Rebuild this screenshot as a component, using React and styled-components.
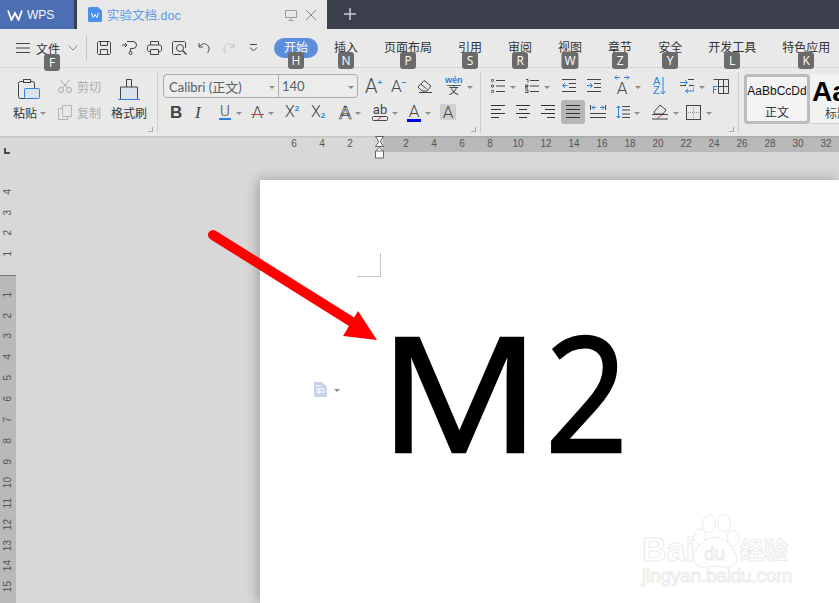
import React from 'react';
import styled, { createGlobalStyle } from 'styled-components';

const Global = createGlobalStyle`
  html, body { margin: 0; padding: 0; background: #d8d8d8; }
  * { box-sizing: border-box; }
`;
const CJK = `"Liberation Sans", "Noto Sans CJK SC", sans-serif`;
const D = '#444';
const B = '#2f7fdc';

const Shell = styled.div`
  position: relative; width: 839px; height: 603px; overflow: hidden;
  display: flex; flex-direction: column; font-family: ${CJK}; color: #333; font-size: 12px;
`;
const TitleBar = styled.div`display: flex; height: 29px; background: #3c404d; flex-shrink: 0;`;
const AppTab = styled.div`
  width: 74px; background: #4b6fb2; color: #f2f5fb; display: flex; align-items: center;
  padding-left: 7px; gap: 4px; font-size: 12px; margin-right: 3px;
`;
const DocTab = styled.div`
  width: 250px; background: #e8e8e8; display: flex; align-items: center; padding-left: 11px;
`;
const DocName = styled.span`color: #5b9be8; font-size: 12.5px; margin-left: 5px; width: 178px;`;
const TabAction = styled.span`display: flex; margin-right: 8px;`;
const NewTab = styled.span`display: flex; margin: 8px 0 0 17px; height: 13px;`;

const MenuBar = styled.div`
  display: flex; align-items: center; height: 39px; padding-left: 16px; background: #e9e9e9;
  border-bottom: 1px solid #d9d9d9; flex-shrink: 0;
`;
const FileLabel = styled.span`margin: 0 8px 0 6px; position: relative; display: inline-block; white-space: nowrap; flex-shrink: 0;`;
const VLine = styled.span`width: 1px; height: 24px; background: #c4c4c4; margin: 0 10px 0 8px; flex-shrink: 0;`;
const Quick = styled.span`display: flex; align-items: center; width: ${p => p.$w}px; height: 24px; flex-shrink: 0;`;
const Tabs = styled.div`display: flex; align-items: center; gap: 6px; flex-shrink: 0;`;
const MenuItem = styled.span`
  position: relative; height: 20px; line-height: 20px; padding: 0 10px; border-radius: 10px; white-space: nowrap;
  color: ${p => (p.$active ? '#fff' : '#333')}; background: ${p => (p.$active ? '#5b8fdc' : 'transparent')};
`;
const KeyTip = styled.span`
  position: absolute; top: 14px; left: calc(50% + ${p => p.$dx || 0}px); transform: translateX(-50%);
  min-width: 16px; height: 17px; line-height: 17px; padding: 0 3px; text-align: center; border-radius: 3px;
  background: #6b6b6b; color: #fff; font: 12px/17px "Open Sans", sans-serif; z-index: 5;
`;

const Ribbon = styled.div`
  display: flex; height: 68px; background: #e9e9e9; flex-shrink: 0; overflow: hidden;
  box-shadow: 0 1px 2px rgba(0,0,0,.12); position: relative; z-index: 1;
`;
const Group = styled.div`
  position: relative; width: ${p => p.$w}px; flex-shrink: 0; padding-top: 6px;
  display: flex; flex-direction: ${p => p.$row ? 'row' : 'column'}; gap: ${p => p.$row ? 0 : 2}px;
  padding-left: ${p => p.$pl || 0}px;
`;
const Sep = styled.span`width: 1px; flex-shrink: 0; background: #cfcfcf; margin: 4px 0 3px;`;
const Launcher = styled.span`
  position: absolute; right: 4px; bottom: 4px; width: 5px; height: 5px;
  border-right: 1px solid #aaa; border-bottom: 1px solid #aaa;
`;
const Row = styled.div`display: flex; align-items: center; height: 24px; padding-left: ${p => p.$pl || 0}px;`;
const Column = styled.div`display: flex; flex-direction: column; gap: 2px; width: ${p => p.$w}px; flex-shrink: 0;`;
const Tool = styled.span`
  display: flex; align-items: center; width: ${p => p.$w}px; height: 24px; flex-shrink: 0;
`;
const Active = styled.span`
  display: flex; align-items: center; justify-content: center; width: 24px; height: 24px;
  background: #b6b6b6; border-radius: 3px;
`;
const Caret = styled.span`
  width: 0; height: 0; margin-left: ${p => p.$g ?? 6}px; margin-top: 2px; flex-shrink: 0;
  border-left: 3px solid transparent; border-right: 3px solid transparent; border-top: 3px solid #8c8c8c;
`;
const BigIcon = styled.span`display: flex; margin: 6px 0 0 ${p => p.$ml}px;`;
const Label = styled.span`color: ${p => p.$off ? '#adadad' : '#333'}; margin-left: ${p => p.$ml || 0}px; margin-top: 1px; white-space: nowrap;`;

const FontBox = styled.div`
  display: flex; height: 24px; width: 195px; margin: 0 7px 0 5px; border: 1px solid #aaa; border-radius: 4px; background: #ececec; flex-shrink: 0;
`;
const FontPart = styled.div`
  display: flex; align-items: center; justify-content: space-between; width: ${p => p.$w}px; padding: 0 3px 0 ${p => p.$pl}px;
  font-family: Lato, "Noto Sans CJK SC", sans-serif; font-size: 13px; color: #56606a;
  ${p => p.$div ? 'border-right: 1px solid #aaa;' : ''}
`;
const Glyph = styled.span`
  position: relative; display: inline-block; font-family: ${p => p.$f || 'Roboto, sans-serif'}; font-weight: ${p => p.$wt || 300};
  font-style: ${p => p.$it ? 'italic' : 'normal'}; font-size: ${p => p.$s || 18}px; line-height: 1; color: ${p => p.$c || D};
  ${p => p.$outline ? `color: #f4f4f4; -webkit-text-stroke: .7px ${D};` : ''}
`;
const Under = styled(Glyph)`border-bottom: 2px solid ${B}; padding: 0 1px 1px; line-height: 12px;`;
const Strike = styled(Glyph)`
  padding: 0 1px;
  &::after { content: ''; position: absolute; left: 0; right: 0; top: 10px; height: 1px; background: #c84a4a; }
`;
const Sup = styled.span`
  display: flex; color: ${B}; font: bold 8px/1 "Liberation Sans", sans-serif; margin: ${p => p.$down ? '8px 0 0 0' : '-7px 0 0 0'};
`;
const Stack = styled.span`display: flex; flex-direction: column; align-items: center; line-height: 1;`;
const Wen = styled.span`color: ${B}; font: 9px/9px "Liberation Sans", sans-serif; font-weight: bold;`;
const WenZi = styled.span`font-size: 10px; line-height: 10px; color: #333; border-top: 1px solid #666; width: 14px; text-align: center;`;
const ColorBar = styled.span`width: 14px; height: 3px; background: #0000f0; margin-top: -1px;`;
const HighlightBox = styled.span`
  width: 16px; height: 16px; background: #cfcfcf; border-radius: 1px; display: flex; align-items: center; justify-content: center;
`;
const SortLetters = styled.span`display: flex; flex-direction: column; color: ${B}; font: 11px/9.5px "Liberation Sans", sans-serif;`;

const StyleCard = styled.div`
  flex-shrink: 0; width: 66px; height: 50px; margin: 6px 0 0 5px; background: #f3f3f3; border: 3px solid #bcbcbc; border-radius: 4px;
  display: flex; flex-direction: column; align-items: center;
`;
const NextCard = styled.div`
  flex-shrink: 0; width: 40px; height: 50px; margin-top: 6px; padding-top: 4px; background: #f2f2f2; border-bottom: 1px solid #cfcfcf; padding-left: 2px;
`;
const Sample = styled.span`font-size: 12px; line-height: 28px; color: #111; white-space: nowrap;`;
const BigSample = styled.span`display: block; font: bold 28px/28px "Liberation Sans", sans-serif; color: #000;`;
const StyleName = styled.span`font-size: 12px; line-height: 16px;`;
const StyleNameNext = styled.span`display: block; font-size: 12px; line-height: 16px; padding-left: 13px; white-space: nowrap; color: #444;`;

const Workspace = styled.div`flex: 1; display: flex; flex-direction: column; background: #d8d8d8; position: relative; min-height: 0;`;
const HRuler = styled.div`display: flex; height: 16px; flex-shrink: 0; position: relative;`;
const HLeft = styled.div`display: flex; width: 383px; padding-left: 280px;`;
const HBand = styled.div`display: flex; flex: 1; background: #b9b9b9; padding-left: 9px; overflow: hidden;`;
const HNum = styled.span`flex: 0 0 28px; text-align: center; font: 10px/16px "Liberation Sans", sans-serif; color: #555;`;
const Indent = styled.svg`position: absolute; left: 375px; top: 0;`;
const TabStop = styled.svg`position: absolute; left: 4px; top: 12px;`;
const Body = styled.div`flex: 1; display: flex; min-height: 0;`;
const VRuler = styled.div`width: 16px; flex-shrink: 0; display: flex; flex-direction: column;`;
const VTop = styled.div`height: 123px; padding-top: 29px; flex-shrink: 0;`;
const VBand = styled.div`flex: 1; background: #b9b9b9; border-top: 1px solid #777; padding-top: 8px; overflow: hidden;`;
const VNum = styled.div`
  height: 20.9px; display: flex; align-items: center; justify-content: center;
  font: 10px/16px "Liberation Sans", sans-serif; color: #555;
  & > span { writing-mode: vertical-rl; transform: rotate(180deg); }
`;
const Canvas = styled.div`flex: 1; padding: 28px 0 0 244px; display: flex; min-width: 0;`;
const Sheet = styled.div`flex: 1; background: #fff; position: relative; box-shadow: -2px 0 12px rgba(0,0,0,.28);`;
const CropMark = styled.div`
  width: 24px; height: 24px; margin: 73px 0 0 97px; border-right: 1px solid #c6c6c6; border-bottom: 1px solid #c6c6c6;
`;
const BigText = styled.div`
  display: flex; font-family: "Open Sans", sans-serif; font-size: 160px; line-height: 160px; color: #000; margin: 33px 0 0 119px;
  -webkit-text-stroke: 2.5px #000; stroke-linejoin: round;
`;
const BigChar = styled.span`
  display: inline-block; transform-origin: left center; transform: scaleX(${p => p.$sx || 1}); margin-left: ${p => p.$ml || 0}px;
`;
const ParaMark = styled.div`position: absolute; left: 54px; top: 202px; display: flex; align-items: center;`;
const Watermark = styled.svg`position: absolute; right: 39px; bottom: 10px;`;
const Arrow = styled.svg`position: absolute; left: 0; top: 0; z-index: 3; pointer-events: none;`;

const Svg = styled.svg`display: block; fill: none; stroke: ${D}; stroke-width: 1; flex-shrink: 0;`;
const I = ({ w = 14, h = 14, children, ...r }) => (
  <Svg width={w} height={h} viewBox={`0 0 ${w} ${h}`} {...r}>{children}</Svg>
);
const Lines = ({ d, s = '#333' }) => <path d={d} stroke={s} />;

const LH = 'M0 .5h14M0 4.500h10M0 8.500h14M0 12.500h8';
const CH = 'M0 .5h14M3 4.500h8M0 8.500h14M3 12.500h8';
const RH = 'M0 .5h14M4 4.500h10M0 8.500h14M6 12.500h8';
const JH = 'M0 .5h14M0 4.500h14M0 8.500h14M0 12.500h14';

const hNums = [2,4,6,8,10,12,14,16,18,20,22,24,26,28,30,32];
const vNums = [1,2,3,4,5,6,7,8,9,10,11,12,13,14,15];
const menus = [
  ['插入','N'],['页面布局','P'],['引用','S'],['审阅','R'],['视图','W'],['章节','Z'],['安全','Y'],['开发工具','L'],['特色应用','K'],
];

export default function App() {
  return (
    <Shell>
      <Global />
      <TitleBar>
        <AppTab>
          <I w={16} h={12}><path d="M1 1.500l3.500 9.500 3.500-7 3.500 7L15 1.500" stroke="#fff" strokeWidth="1.800" /></I>
          WPS
        </AppTab>
        <DocTab>
          <I w={14} h={15}>
            <path d="M1.500 0H10l4 4v9.500a1.500 1.500 0 0 1-1.500 1.500h-11A1.500 1.500 0 0 1 0 13.500V1.500A1.500 1.500 0 0 1 1.500 0z" fill="#4a90ea" stroke="none" />
            <path d="M3.500 6l1.700 4.500L7 7.500l1.800 3L10.500 6" stroke="#fff" />
          </I>
          <DocName>实验文档.doc</DocName>
          <TabAction>
            <I w={12} h={12}><path d="M.5 1.500h11v7H.5zM6 8.500v3M3.500 11.500h5" stroke="#9a9a9a" /></I>
          </TabAction>
          <TabAction>
            <I w={12} h={12}><path d="M1 1l10 10M11 1L1 11" stroke="#888" /></I>
          </TabAction>
        </DocTab>
        <NewTab>
          <I w={12} h={12}><path d="M6 0v12M0 6h12" stroke="#c8cad0" strokeWidth="1.500" /></I>
        </NewTab>
      </TitleBar>

      <MenuBar>
        <I w={14} h={10}><path d="M0 .5h14M0 5h14M0 9.500h14" /></I>
        <FileLabel>文件<KeyTip $dx={4}>F</KeyTip></FileLabel>
        <I w={10} h={6}><path d="M.5.500L5 5l4.500-4.500" stroke="#888" /></I>
        <VLine />
        <Quick $w={25}>
          <I><path d="M1.500.500h11l1 1v11l-1 1h-11l-1-1v-11zM3.500.500v4h7v-4M3.500 13.500v-5h7v5" /></I>
        </Quick>
        <Quick $w={25}>
          <I w={15} h={14}><path d="M5 .5h6a3.500 3.500 0 0 1 0 7H8.500v3M0 4h5M3 2l2 2-2 2" /><circle cx="8.500" cy="12" r="1.500" /></I>
        </Quick>
        <Quick $w={25}>
          <I w={15} h={14}><path d="M3.500 4V.5h8V4M3.500 10.500h-2l-1-1v-4l1-1.500h12l1 1.500v4l-1 1h-2M3.500 8.500h8v5h-8z" /></I>
        </Quick>
        <Quick $w={26}>
          <I w={15} h={14}><path d="M9 13.500H1.500l-1-1v-11l1-1h11l1 1V7" /><circle cx="8" cy="7" r="3.500" /><path d="M10.500 9.500l4 4" strokeWidth="1.500" /></I>
        </Quick>
        <Quick $w={24}>
          <I w={13} h={12}><path d="M1 1v4h4M1.200 5C3 2 6 1 8.500 2.500c3 2 3.500 5 1 8.500" /></I>
        </Quick>
        <Quick $w={27}>
          <I w={13} h={12}><path d="M12 1v4H8M11.800 5C10 2 7 1 4.500 2.500c-3 2-3.500 5-1 8.500" stroke="#c2c2c2" /></I>
        </Quick>
        <Quick $w={25}>
          <I w={9} h={8}><path d="M1 .5h7M1 3.500L4.500 7 8 3.500" /></I>
        </Quick>
        <Tabs>
          <MenuItem $active>开始<KeyTip>H</KeyTip></MenuItem>
          {menus.map(([t, k]) => (
            <MenuItem key={t}>{t}<KeyTip>{k}</KeyTip></MenuItem>
          ))}
        </Tabs>
      </MenuBar>

      <Ribbon>
        <Group $w={157} $row $pl={13}>
          <Column $w={45}>
            <Row>
              <BigIcon $ml={5}>
                <I w={22} h={21}>
                  <rect x=".5" y="2.500" width="16" height="17" rx="2" />
                  <rect x="5.500" y=".5" width="7" height="3" fill="#e9e9e9" />
                  <rect x="6.500" y="9.500" width="15" height="10" rx="1" fill="#dbe3ec" stroke={B} />
                </I>
              </BigIcon>
            </Row>
            <Row><Label>粘贴</Label><Caret $g={3} /></Row>
          </Column>
          <Column $w={53}>
            <Row>
              <I w={14} h={14} style={{ stroke: '#a8a8a8' }}>
                <circle cx="3" cy="11" r="2.500" /><circle cx="11" cy="11" r="2.500" />
                <path d="M4.500 9L12 .5M9.500 9L2 .5" />
              </I>
              <Label $off $ml={5}>剪切</Label>
            </Row>
            <Row>
              <I w={14} h={15} style={{ stroke: '#b4b4b4' }}>
                <path d="M4.500 .5h9v11h-9zM4.500 3.500H.5v11h9v-3" />
              </I>
              <Label $off $ml={5}>复制</Label>
            </Row>
          </Column>
          <Column $w={36}>
            <Row>
              <BigIcon $ml={7}>
                <I w={22} h={21}>
                  <path d="M2.500 8h17v12h-17z" fill="#dbe3ec" stroke="none" />
                  <path d="M8.500 8V.5h5V8M2.500 20V8h17v12" fill="none" />
                  <path d="M0 20.500h22" stroke={B} />
                </I>
              </BigIcon>
            </Row>
            <Row><Label>格式刷</Label></Row>
          </Column>
          <Launcher />
        </Group>
        <Sep />
        <Group $w={322}>
          <Row>
            <FontBox>
              <FontPart $w={115} $pl={5} $div>Calibri (正文)<Caret $g={0} /></FontPart>
              <FontPart $w={78} $pl={3}>140<Caret $g={0} /></FontPart>
            </FontBox>
            <Tool $w={26}><Glyph $s={20}>A</Glyph><Sup>+</Sup></Tool>
            <Tool $w={26}><Glyph $s={17}>A</Glyph><Sup>−</Sup></Tool>
            <Tool $w={28}>
              <I w={16} h={14}><path d="M1 8l6-6.500 7 5.500-4 5H5zM3.800 5l6 5M2 13.500h13" /></I>
            </Tool>
            <Tool $w={30}>
              <Stack><Wen>wén</Wen><WenZi>文</WenZi></Stack>
              <Caret $g={4} />
            </Tool>
          </Row>
          <Row $pl={12}>
            <Tool $w={25}><Glyph $s={17} $wt={700} $f='"Liberation Sans", sans-serif'>B</Glyph></Tool>
            <Tool $w={24}><Glyph $s={17} $it $wt={400} $f='"Liberation Serif", serif'>I</Glyph></Tool>
            <Tool $w={32}><Under $s={15}>U</Under><Caret $g={5} /></Tool>
            <Tool $w={34}><Strike $s={17}>A</Strike><Caret $g={4} /></Tool>
            <Tool $w={26}><Glyph $s={16}>X</Glyph><Sup>2</Sup></Tool>
            <Tool $w={28}><Glyph $s={16}>X</Glyph><Sup $down>2</Sup></Tool>
            <Tool $w={33}><Glyph $s={19} $wt={400} $outline>A</Glyph><Caret $g={4} /></Tool>
            <Tool $w={35}>
              <Stack>
                <Glyph $s={13} $wt={400}>ab</Glyph>
                <I w={16} h={5}><rect x=".5" y=".5" width="15" height="4" rx="1" /><path d="M5 4.500L10 .5" stroke="#e04040" /></I>
              </Stack>
              <Caret $g={4} />
            </Tool>
            <Tool $w={33}>
              <Stack><Glyph $s={17}>A</Glyph><ColorBar /></Stack>
              <Caret $g={4} />
            </Tool>
            <Tool $w={16}><HighlightBox><Glyph $s={17}>A</Glyph></HighlightBox></Tool>
          </Row>
          <Launcher />
        </Group>
        <Sep />
        <Group $w={257}>
          <Row $pl={10}>
            <Tool $w={34}>
              <I><circle cx="1.500" cy="1.500" r="1.200" /><circle cx="1.500" cy="7" r="1.200" /><circle cx="1.500" cy="12.500" r="1.200" /><path d="M5 1.500h9M5 7h9M5 12.500h9" /></I>
              <Caret $g={5} />
            </Tool>
            <Tool $w={37}>
              <I><path d="M1 .5h2v3M0 6h3v1.500H0V9h3M0 11h3v2.500H0M5 1.500h9M5 7h9M5 12.500h9" /></I>
              <Caret $g={5} />
            </Tool>
            <Tool $w={25}>
              <I><path d="M0 .5h14M7 4.500h7M7 8.500h7M0 12.500h14" /><path d="M5.500 6.500H.5M3 4L.5 6.500 3 9" stroke={B} /></I>
            </Tool>
            <Tool $w={27}>
              <I><path d="M0 .5h14M7 4.500h7M7 8.500h7M0 12.500h14" /><path d="M0 6.500h5M3 4l2.500 2.500L3 9" stroke={B} /></I>
            </Tool>
            <Tool $w={39}>
              <Stack>
                <I w={16} h={5}><path d="M1 2.500h5M10 2.500h5M3 .5l-2 2 2 2M13 .5l2 2-2 2" stroke={B} /></I>
                <Glyph $s={17}>A</Glyph>
              </Stack>
              <Caret $g={5} />
            </Tool>
            <Tool $w={27}>
              <SortLetters><span>A</span><span>Z</span></SortLetters>
              <I w={6} h={18}><path d="M3 0v17M.5 14.500L3 17l2.500-2.500" stroke={B} /></I>
            </Tool>
            <Tool $w={33}>
              <I>
                <path d="M8 .5h6M0 3.500h5M9 6.500h5M0 6.500h6" />
                <path d="M0 3.500h7M5 1l2.500 2.500L5 6M14 8v4H6M8 10l-2.500 2L8 14" stroke={B} />
              </I>
              <Caret $g={5} />
            </Tool>
            <Tool $w={16}>
              <I w={16} h={15}><path d="M.5 .5h15v14H5.500M5.500 .5v14M5.500 7.500h10M10.500 .5v14" /><path d="M.5 7.500h4M.5 7.500v7M.5 10.500h3" stroke={B} /></I>
            </Tool>
          </Row>
          <Row $pl={10}>
            <Tool $w={25}><I><Lines d={LH} /></I></Tool>
            <Tool $w={25}><I><Lines d={CH} /></I></Tool>
            <Tool $w={20}><I><Lines d={RH} /></I></Tool>
            <Tool $w={29}><Active><I><Lines d={JH} /></I></Active></Tool>
            <Tool $w={26}>
              <I w={16} h={14}><path d="M.5 0v5M15.500 0v5" /><path d="M2 2.500h4M10 2.500h4M4 .5l-2 2 2 2M12 .5l2 2-2 2" stroke={B} /><path d="M0 8.500h16M0 12.500h16" /></I>
            </Tool>
            <Tool $w={36}>
              <I><path d="M6 1.500h8M6 5h8M6 9h8M6 12.500h8" /><path d="M2.500 1v12M.5 3l2-2 2 2M.5 11l2 2 2-2" stroke={B} /></I>
              <Caret $g={4} />
            </Tool>
            <Tool $w={34}>
              <I w={16} h={16}>
                <path d="M2 8l6-7 6 5-3 4H3zM1 10.500h14a1 1 0 0 1 0 4.500H1a1 1 0 0 1 0-4.500z" />
                <path d="M5 14.500l5-3.500" stroke="#e04040" />
              </I>
              <Caret $g={5} />
            </Tool>
            <Tool $w={24}>
              <I w={15} h={15}><rect x=".5" y=".5" width="14" height="14" /><path d="M7.500 2v11M2 7.500h11" stroke="#9a9a9a" strokeDasharray="1 1" /></I>
              <Caret $g={5} />
            </Tool>
          </Row>
          <Launcher />
        </Group>
        <Sep />
        <StyleCard>
          <Sample>AaBbCcDd</Sample>
          <StyleName>正文</StyleName>
        </StyleCard>
        <NextCard>
          <BigSample>Aa</BigSample>
          <StyleNameNext>标题</StyleNameNext>
        </NextCard>
      </Ribbon>

      <Workspace>
        <HRuler>
          <HLeft>{[6,4,2].map(n => <HNum key={n}>{n}</HNum>)}</HLeft>
          <HBand>{hNums.map(n => <HNum key={n}>{n}</HNum>)}</HBand>
          <Indent width="10" height="23" viewBox="0 0 10 23">
            <path d="M.5.5h8L5.500 5v1L8.500 10.500h-8L3.500 6V5z" fill="#fff" stroke="#666" />
            <path d="M.5 15l4-3.500 4 3.500v7h-8zM.5 15h8" fill="#fff" stroke="#666" />
          </Indent>
          <TabStop width="6" height="6" viewBox="0 0 6 6"><path d="M1 0v5h5" fill="none" stroke="#222" strokeWidth="1.500" /></TabStop>
        </HRuler>
        <Body>
          <VRuler>
            <VTop>{[4,3,2,1].map(n => <VNum key={n}><span>{n}</span></VNum>)}</VTop>
            <VBand>{vNums.map(n => <VNum key={n}><span>{n}</span></VNum>)}</VBand>
          </VRuler>
          <Canvas>
            <Sheet>
              <CropMark />
              <BigText><BigChar $sx={1.12}>M</BigChar><BigChar $sx={0.91} $ml={22}>2</BigChar></BigText>
              <ParaMark>
                <I w={13} h={15}>
                  <path d="M0 0h8l5 5v10H0z" fill="#c3d3ea" stroke="none" />
                  <path d="M2 4h5M2 7h9M2 10h9M5 7v5" stroke="#fff" />
                </I>
                <Caret $g={7} />
              </ParaMark>
              <Watermark width="160" height="82" viewBox="0 0 160 82">
                <g fill="#fff" stroke="#ebebeb" strokeWidth="1">
                  <ellipse cx="69" cy="13" rx="6.500" ry="9" />
                  <ellipse cx="84" cy="12" rx="6.500" ry="9" />
                  <ellipse cx="60" cy="26" rx="6" ry="8" />
                  <ellipse cx="93" cy="27" rx="6" ry="8" />
                  <path d="M75 26c10 0 22 14 22 22s-8 9-14 8-10-1-16 0-14-1-14-9 12-21 22-21z" />
                  <text x="2" y="50" fontFamily="Liberation Sans" fontWeight="bold" fontSize="34">Bai</text>
                  <text x="64" y="49" fontFamily="Liberation Sans" fontSize="19">du</text>
                  <text x="100" y="48" fontFamily="Noto Sans CJK SC" fontWeight="bold" fontSize="24">经验</text>
                  <text x="2" y="71" fontFamily="Liberation Sans" fontSize="19" textLength="150">jingyan.baidu.com</text>
                </g>
              </Watermark>
            </Sheet>
          </Canvas>
        </Body>
      </Workspace>

      <Arrow width="839" height="603" viewBox="0 0 839 603">
        <path d="M213 235L352 322" stroke="#fe0000" strokeWidth="10" strokeLinecap="round" />
        <path d="M358 311L377 340 343 336z" fill="#fe0000" />
      </Arrow>
    </Shell>
  );
}
